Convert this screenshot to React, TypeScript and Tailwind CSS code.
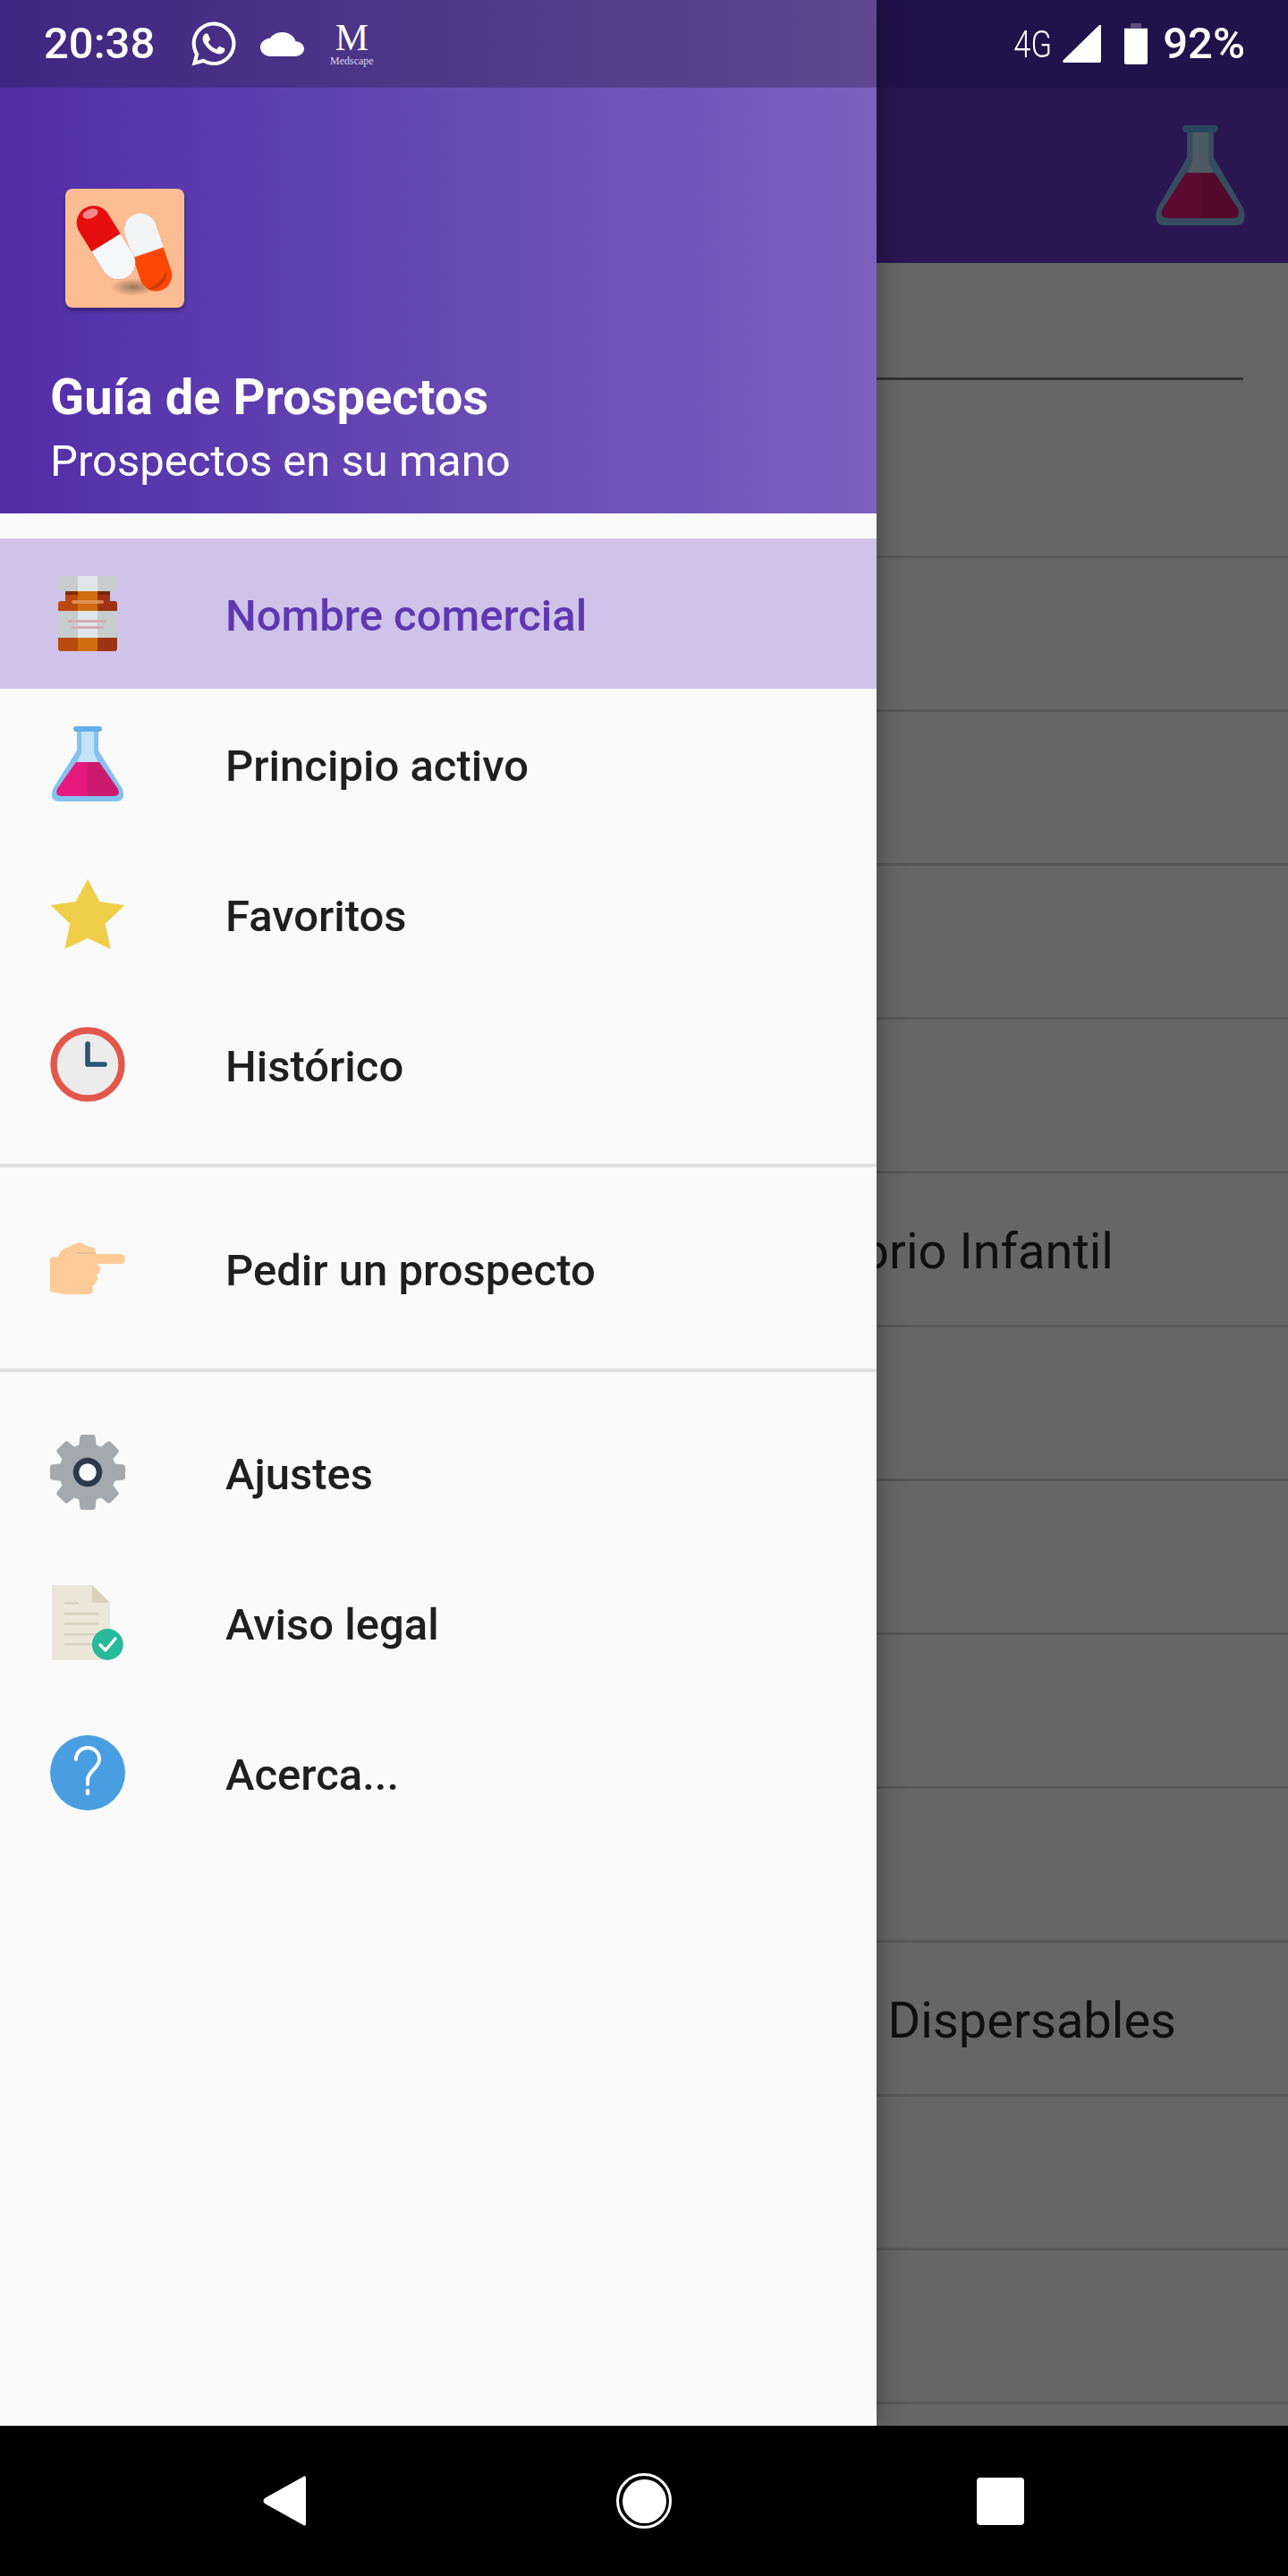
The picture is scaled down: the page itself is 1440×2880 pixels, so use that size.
import type { ReactNode } from 'react';
import { FaWhatsapp } from 'react-icons/fa';

function BottleIcon() {
  return (
    <svg viewBox="0 0 84 84" className="w-[84px] h-[84px]">
      <path d="M9 3q0-3 3-3h60q3 0 3 3v14H9z" fill="#c6cdcc" />
      <rect x="31" y="0" width="22" height="17" fill="#dfe6e9" />
      <rect x="17" y="17" width="14" height="11" fill="#b94a0d" />
      <rect x="31" y="17" width="22" height="11" fill="#cf6d10" />
      <rect x="53" y="17" width="14" height="11" fill="#9c3412" />
      <rect x="17" y="17" width="14" height="4" fill="#8a2c05" />
      <rect x="53" y="17" width="14" height="4" fill="#7a2604" />
      <path d="M9 39v-8q0-3 3-3h19v11z" fill="#b94a0d" />
      <rect x="31" y="28" width="22" height="11" fill="#cf6d10" />
      <path d="M53 28h19q3 0 3 3v8H53z" fill="#9c3412" />
      <rect x="24" y="27" width="36" height="4" rx="2" fill="#e59a63" opacity="0.8" />
      <rect x="9" y="39" width="66" height="30" fill="#c6cdcc" />
      <rect x="31" y="39" width="22" height="30" fill="#dfe6e9" />
      <rect x="20" y="49" width="43" height="3" fill="#cfaeb4" />
      <rect x="24" y="56" width="36" height="3" fill="#cfaeb4" />
      <path d="M9 69h22v15H12q-3 0-3-3z" fill="#b94a0d" />
      <rect x="31" y="69" width="22" height="15" fill="#cf6d10" />
      <path d="M53 69h22v12q0 3-3 3H53z" fill="#9c3412" />
    </svg>
  );
}

function FlaskIcon({ className }: { className: string }) {
  return (
    <svg viewBox="0 0 84 84" preserveAspectRatio="none" className={className}>
      <path d="M30 5H54V27L81 70Q85 84 74 84H10Q-1 84 3 70L30 27Z" fill="#85c1ee" />
      <path d="M35 5H49V30L54 40H30L35 30Z" fill="#c4e2f8" />
      <rect x="26" y="0" width="32" height="6" rx="3" fill="#63b0ea" />
      <path d="M29 40H42V78H13Q5 78 8 70Z" fill="#e6197d" />
      <path d="M42 40H55L76 70Q79 78 71 78H42Z" fill="#cc1a6e" />
    </svg>
  );
}

function StarIcon() {
  return (
    <svg viewBox="0 0 84 84" className="w-[84px] h-[84px]">
      <path d="M42 3L55.3 28L83.3 32L61.7 53L67.7 81L42 69L16.3 81L22.3 53L0.7 32L28.7 28Z" fill="#efce4a" />
    </svg>
  );
}

function ClockIcon() {
  return (
    <svg viewBox="0 0 84 84" className="w-[84px] h-[84px]">
      <circle cx="42" cy="42" r="38" fill="#ececec" stroke="#e2574c" strokeWidth="7.4" />
      <path d="M42 19V42H61" fill="none" stroke="#2c5570" strokeWidth="5.6" strokeLinecap="round" strokeLinejoin="round" />
    </svg>
  );
}

function HandIcon() {
  return (
    <svg viewBox="0 -2 84 84" className="w-[84px] h-[84px]">
      <path
        d="M0 28L9 27Q11 21 14 19L32 11Q36 11 39 14L49 17Q51 19 51 24H79Q84 25 84 30Q84 34 79 35H52Q57 38 56 42Q55 46 52 47Q54 51 52 54Q50 58 47 60Q49 64 47 67Q45 69 41 69L16 69L0 66Z"
        fill="#fccb97"
      />
      <rect x="30" y="22" width="21" height="2" fill="#e8bf94" />
    </svg>
  );
}

function GearIcon() {
  return (
    <svg viewBox="0 0 84 84" className="w-[84px] h-[84px]">
      {[0, 45, 90, 135, 180, 225, 270, 315].map((a) => (
        <path
          key={a}
          transform={`rotate(${a} 42 42)`}
          d="M32 14L33.5 2Q34 0 36 0H48Q50 0 50.5 2L52 14Z"
          fill="#a4a9ae"
        />
      ))}
      <circle cx="42" cy="42" r="32" fill="#a4a9ae" />
      <circle cx="42" cy="42" r="13" fill="#fbfbfb" stroke="#2c3a4c" strokeWidth="6.5" />
    </svg>
  );
}

function DocIcon() {
  return (
    <svg viewBox="0 0 84 84" className="w-[84px] h-[84px]">
      <path d="M2 0H47L67 20V84H2Z" fill="#ebe7d9" />
      <path d="M47 0L67 20H47Z" fill="#d8d2bc" />
      <rect x="16" y="19" width="16" height="2.5" fill="#d6d1be" />
      <rect x="16" y="31" width="38" height="2.5" fill="#d6d1be" />
      <rect x="16" y="42" width="38" height="2.5" fill="#d6d1be" />
      <rect x="16" y="54" width="38" height="2.5" fill="#d6d1be" />
      <rect x="16" y="65" width="38" height="2.5" fill="#d6d1be" />
      <circle cx="64.3" cy="66.5" r="17.4" fill="#26b99a" />
      <path d="M56 67L62 73L73 60" fill="none" stroke="#fff" strokeWidth="3.4" strokeLinecap="round" strokeLinejoin="round" />
    </svg>
  );
}

function HelpIcon() {
  return (
    <svg viewBox="0 0 84 84" className="w-[84px] h-[84px]">
      <circle cx="42" cy="42" r="42" fill="#489ee0" />
      <path d="M29 27C29 19 35 14 42 14C49 14 55 19 55 27C55 37 42 40 42 50V55" fill="none" stroke="#fff" strokeWidth="4" strokeLinecap="round" />
      <path d="M42 62V65" fill="none" stroke="#fff" strokeWidth="4.4" strokeLinecap="round" />
    </svg>
  );
}

function Capsule({ x, y, angle, len, r, top, bottom }: { x: number; y: number; angle: number; len: number; r: number; top: string; bottom: string }) {
  return (
    <g transform={`translate(${x} ${y}) rotate(${angle})`}>
      <rect x={-r} y={-r} width={r * 2} height={len + r * 2} rx={r} fill={top} />
      <path d={`M${-r} ${len / 2}H${r}V${len}A${r} ${r} 0 0 1 ${-r} ${len}Z`} fill={bottom} />
    </g>
  );
}

function AppLogo() {
  return (
    <div className="w-[133px] h-[133px] rounded-[8px] bg-[#fdbd93] shadow-[0_3px_4px_rgba(0,0,0,0.35)]">
      <svg viewBox="0 0 133 133" className="w-[133px] h-[133px]">
        <defs>
          <radialGradient id="pillShadow">
            <stop offset="0%" stopColor="#8a6a52" stopOpacity="0.85" />
            <stop offset="100%" stopColor="#8a6a52" stopOpacity="0" />
          </radialGradient>
        </defs>
        <ellipse cx="76" cy="110" rx="26" ry="10" fill="url(#pillShadow)" />
        <Capsule x={84} y={45.6} angle={-18.7} len={54} r={18} top="#f2f4f6" bottom="#fb4806" />
        <path d="M113 92A18 18 0 0 1 92 112Q108 106 113 92Z" fill="#c93a06" />
        <Capsule x={31.7} y={38} angle={-31.8} len={52.5} r={19} top="#e60d0d" bottom="#f6f8f9" />
        <ellipse cx="28" cy="28" rx="9" ry="5" fill="#fff" opacity="0.5" transform="rotate(-20 28 28)" />
      </svg>
    </div>
  );
}

function MenuRow({ icon, label, active }: { icon: ReactNode; label: string; active?: boolean }) {
  return (
    <div className={`h-[168px] flex items-center pl-14 ${active ? 'bg-[#d0c3e9]' : ''}`}>
      <div className="w-[84px] h-[84px] shrink-0">{icon}</div>
      <span className={`ml-[112px] mt-[6px] text-[49px] font-medium ${active ? 'text-[#5f37b0]' : 'text-[#1f1f1f]'}`}>{label}</span>
    </div>
  );
}

function ListRow({ children }: { children?: ReactNode }) {
  return (
    <div className="h-[172px] shrink-0 flex items-center justify-end border-b-[3px] border-[#575757] text-[56px] text-[#0f0f0f] whitespace-nowrap">
      {children}
    </div>
  );
}

export default function App() {
  return (
    <div className="relative w-[1440px] h-[2880px] overflow-hidden flex flex-col font-[Roboto,sans-serif]">
      {/* Screen behind the drawer, already dimmed */}
      <div className="h-[98px] shrink-0 bg-[#20124a] flex items-center justify-end pr-[48px] text-white">
        <span className="text-[42px] font-light scale-x-[0.82] origin-right mr-[12px]">4G</span>
        <svg viewBox="0 0 44 42" className="w-[44px] h-[42px]">
          <path d="M43 0V40Q43 42 41 42H2Q-1 42 1 39L41 0Q43-1 43 0Z" fill="#fff" />
        </svg>
        <div className="ml-[25px] w-[26px] h-[46px] flex flex-col items-center">
          <div className="w-[12px] h-[5px] bg-[#5f4f80]" />
          <div className="w-[26px] h-[41px] bg-white rounded-b-[2px] border-t-[1px] border-[#5f4f80]" />
        </div>
        <span className="ml-[17px] text-[49px] font-medium">92%</span>
      </div>
      <div className="h-[196px] shrink-0 bg-[#2a1650] flex items-center justify-end pr-[46px]">
        <FlaskIcon className="w-[104px] h-[112px] brightness-[0.4]" />
      </div>
      <div className="flex-1 min-h-0 bg-[#666666] overflow-hidden flex flex-col">
        <div className="h-[131px] shrink-0 mr-[50px] border-b-[3px] border-[#333333]" />
        <div className="h-[199px] shrink-0 border-b-[3px] border-[#575757]" />
        <ListRow />
        <ListRow />
        <ListRow />
        <ListRow />
        <ListRow>
          <span className="pr-[195px] mt-[4px]">Supositorio Infantil</span>
        </ListRow>
        <ListRow />
        <ListRow />
        <ListRow />
        <ListRow />
        <ListRow>
          <span className="pr-[125px] mt-[4px]">Comprimidos Dispersables</span>
        </ListRow>
        <ListRow />
        <ListRow />
        <ListRow />
      </div>
      <div className="h-[168px] shrink-0 bg-black flex items-center pl-[294px]">
        <svg viewBox="0 0 48 56" className="w-[48px] h-[56px] shrink-0">
          <path d="M45 1Q48-1 48 3V53Q48 57 45 55L2 31Q-1 28 2 25Z" fill="#fff" />
        </svg>
        <div className="ml-[347px] w-[62px] h-[62px] shrink-0 rounded-full border-[3px] border-white flex items-center justify-center">
          <div className="w-[49px] h-[49px] rounded-full bg-white" />
        </div>
        <div className="ml-[341px] w-[53px] h-[53px] shrink-0 rounded-[4px] bg-white" />
      </div>

      {/* Navigation drawer */}
      <div className="absolute top-0 left-0 bottom-[168px] w-[980px] bg-[#fafafa] shadow-[0_0_30px_rgba(0,0,0,0.35)] flex flex-col">
        <div className="h-[98px] shrink-0 bg-linear-to-r from-[#3f2682] to-[#5f478f] flex items-center pl-[49px] text-white">
          <span className="text-[49px] font-medium">20:38</span>
          <FaWhatsapp className="ml-[38px] w-[56px] h-[56px]" />
          <svg viewBox="0 4 24 16" preserveAspectRatio="none" className="ml-[24px] w-[49px] h-[27px]">
            <path
              d="M19.35 10.04C18.67 6.59 15.64 4 12 4 9.11 4 6.6 5.64 5.35 8.04 2.34 8.36 0 10.91 0 14c0 3.31 2.69 6 6 6h13c2.76 0 5-2.24 5-5 0-2.64-2.05-4.78-4.65-4.96z"
              fill="#fff"
            />
          </svg>
          <div className="ml-[29px] w-[48px] flex flex-col items-center font-['Liberation_Serif',serif]">
            <span className="text-[42px] leading-[34px] h-[36px]">M</span>
            <span className="text-[12px] leading-[12px] mt-[1px] text-[#ddd6ee]">Medscape</span>
          </div>
        </div>
        <div className="h-[476px] shrink-0 bg-linear-to-r from-[#512da8] to-[#7e60be] pl-14 flex flex-col text-white">
          <div className="mt-[113px] ml-[17px]">
            <AppLogo />
          </div>
          <div className="mt-[65px] text-[56px] leading-[70px] font-bold">Guía de Prospectos</div>
          <div className="mt-[2px] text-[49px] leading-[70px]">Prospectos en su mano</div>
        </div>
        <div className="pt-7">
          <MenuRow active icon={<BottleIcon />} label="Nombre comercial" />
          <MenuRow icon={<FlaskIcon className="w-[84px] h-[84px]" />} label="Principio activo" />
          <MenuRow icon={<StarIcon />} label="Favoritos" />
          <MenuRow icon={<ClockIcon />} label="Histórico" />
          <div className="h-[4px] mt-[27px] mb-[29px] bg-[#e0e0e0]" />
          <MenuRow icon={<HandIcon />} label="Pedir un prospecto" />
          <div className="h-[4px] mt-[28px] mb-[28px] bg-[#e0e0e0]" />
          <MenuRow icon={<GearIcon />} label="Ajustes" />
          <MenuRow icon={<DocIcon />} label="Aviso legal" />
          <MenuRow icon={<HelpIcon />} label="Acerca..." />
        </div>
      </div>
    </div>
  );
}
